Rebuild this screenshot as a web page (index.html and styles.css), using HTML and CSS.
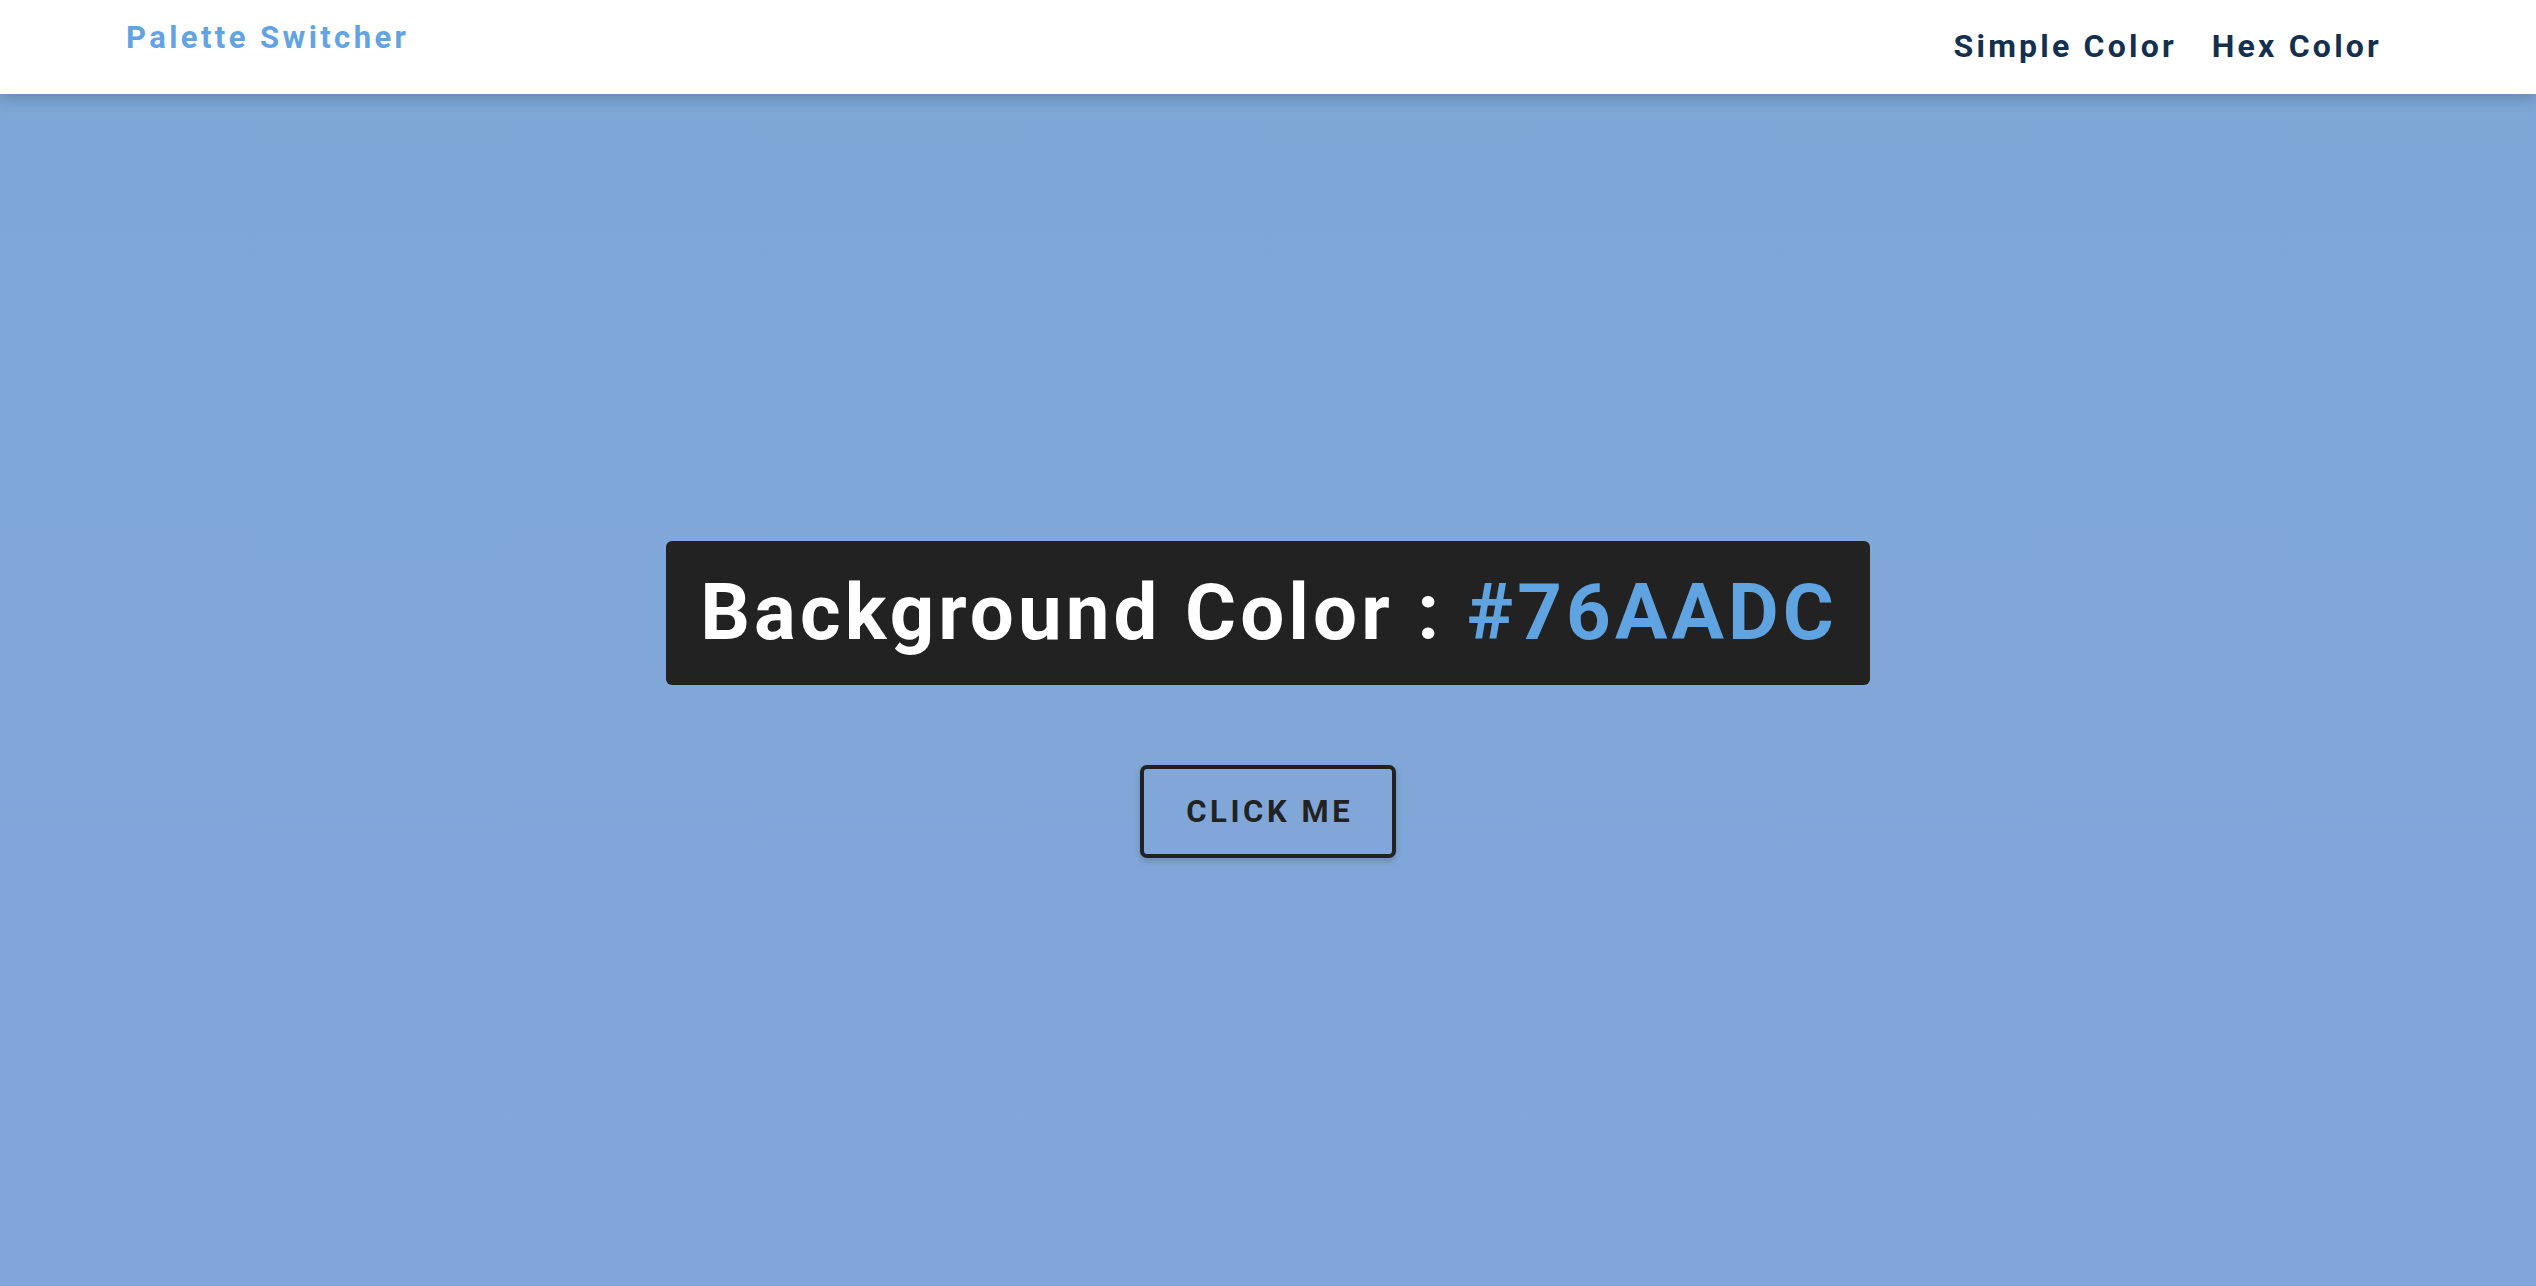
FILE: index.html
```html
<!DOCTYPE html>
<html lang="en">
<head>
<meta charset="utf-8">
<title>Palette Switcher</title>
<link rel="stylesheet" href="styles.css">
</head>
<body>
<header class="navbar">
  <a class="brand" href="#">Palette Switcher</a>
  <nav class="links">
    <a class="link" href="#">Simple Color</a>
    <a class="link" href="#">Hex Color</a>
  </nav>
</header>
<main class="stage">
  <h1 class="label">Background Color : <span class="hex">#76AADC</span></h1>
  <button class="btn" type="button">Click me</button>
</main>
</body>
</html>
```
FILE: styles.css
```css
* { box-sizing: border-box; }
html, body { height: 100%; }
body {
  margin: 0;
  font-family: Roboto, "Liberation Sans", sans-serif;
  display: flex;
  flex-direction: column;
  background: linear-gradient(180deg, #7ea7d6 0%, #80a7d8 60%, #82a6db 100%);
  overflow: hidden;
}
.navbar {
  height: 94px;
  flex: 0 0 94px;
  background: #fff;
  display: flex;
  justify-content: space-between;
  align-items: flex-start;
  padding: 0 154px 0 126px;
  box-shadow: 0 3px 14px rgba(40, 60, 90, 0.35);
  position: relative;
  z-index: 1;
}
.brand {
  color: #62a4e3;
  text-decoration: none;
  font-weight: 700;
  font-size: 31px;
  letter-spacing: 3.4px;
  line-height: 1;
  margin-top: 22px;
}
.links {
  display: flex;
  gap: 35px;
  margin-top: 30px;
}
.link {
  color: #14304f;
  text-decoration: none;
  font-weight: 700;
  font-size: 32px;
  letter-spacing: 3.2px;
  line-height: 1;
}
.stage {
  flex: 1;
  display: flex;
  flex-direction: column;
  align-items: center;
  justify-content: center;
  gap: 80px;
  padding-top: 18px;
}
.label {
  margin: 0;
  background: #222;
  color: #fff;
  border-radius: 6px;
  height: 144px;
  display: flex;
  align-items: center;
  padding: 0 32px 0 34px;
  font-size: 78px;
  font-weight: 700;
  letter-spacing: 4.1px;
  white-space: pre;
}
.hex { color: #5fa3e1; }
.btn {
  width: 256px;
  height: 93px;
  border: 4px solid #222;
  border-radius: 7px;
  background: transparent;
  color: #222;
  font-family: Roboto, "Liberation Sans", sans-serif;
  font-weight: 700;
  font-size: 31px;
  letter-spacing: 3.6px;
  text-indent: 3.6px;
  text-transform: uppercase;
  box-shadow: 0 3px 6px rgba(0, 0, 0, 0.18);
  cursor: pointer;
}
```
